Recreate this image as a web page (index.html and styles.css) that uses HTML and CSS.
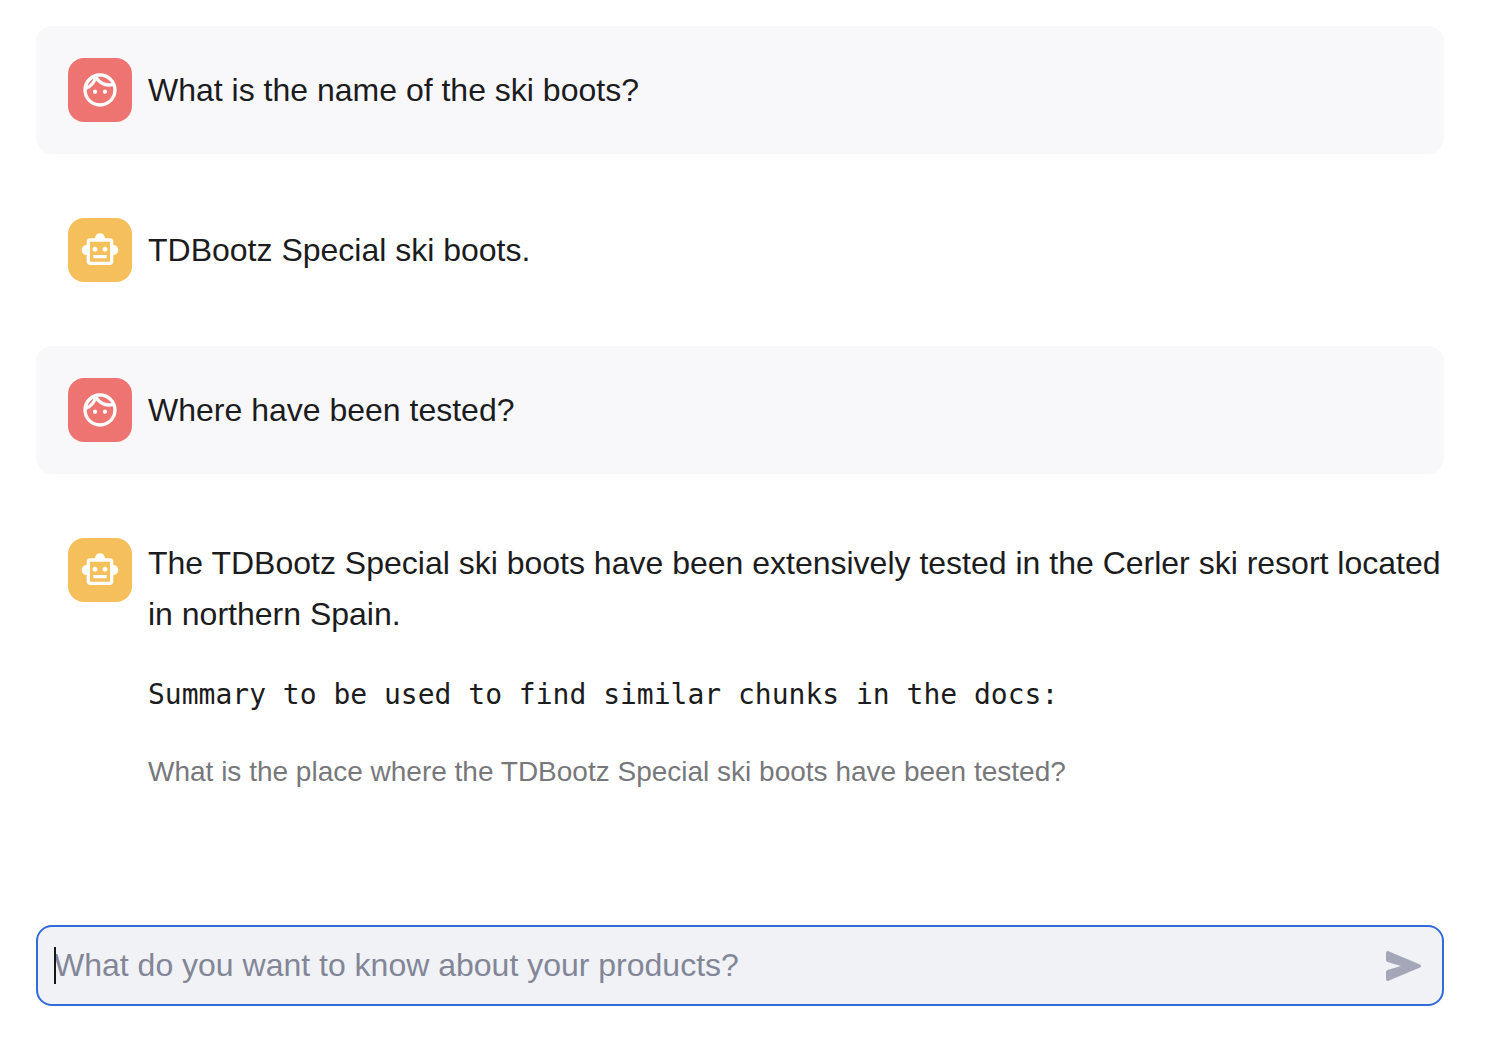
FILE: index.html
```
<!DOCTYPE html>
<html lang="en">
<head>
<meta charset="utf-8">
<meta name="viewport" content="width=device-width, initial-scale=1">
<title>Product chat</title>
<link rel="stylesheet" href="styles.css">
</head>
<body>
<svg class="sprite" aria-hidden="true">
  <symbol id="face" viewBox="0 0 24 24"><path d="M10.25 13c0 .69-.56 1.25-1.25 1.25S7.75 13.69 7.75 13s.56-1.25 1.25-1.25 1.25.56 1.25 1.25zM15 11.75c-.69 0-1.25.56-1.25 1.25s.56 1.25 1.25 1.25 1.25-.56 1.25-1.25-.56-1.25-1.25-1.25zm7 .25c0 5.52-4.48 10-10 10S2 17.52 2 12 6.48 2 12 2s10 4.48 10 10zM10.66 4.12C12.06 6.44 14.6 8 17.5 8c.46 0 .91-.05 1.34-.12C17.44 5.56 14.9 4 12 4c-.46 0-.91.05-1.34.12zM4.42 9.47c1.71-.97 3.03-2.55 3.66-4.44C6.37 6 5.05 7.58 4.42 9.47zM20 12c0-.78-.12-1.53-.33-2.24-.7.15-1.42.24-2.17.24-3.13 0-5.92-1.44-7.76-3.69C8.69 8.87 6.6 10.88 4 11.86c.01.04 0 .09 0 .14 0 4.41 3.59 8 8 8s8-3.59 8-8z"/></symbol>
  <symbol id="robot" viewBox="0 0 24 24"><path d="M20 9V7c0-1.1-.9-2-2-2h-3c0-1.66-1.34-3-3-3S9 3.34 9 5H6c-1.1 0-2 .9-2 2v2c-1.66 0-3 1.34-3 3s1.34 3 3 3v4c0 1.1.9 2 2 2h12c1.1 0 2-.9 2-2v-4c1.66 0 3-1.34 3-3s-1.34-3-3-3zm-2 10H6V7h12v12zm-9-6c-.83 0-1.5-.67-1.5-1.5S8.17 10 9 10s1.5.67 1.5 1.5S9.83 13 9 13zm7.5-1.5c0 .83-.67 1.5-1.5 1.5s-1.5-.67-1.5-1.5.67-1.5 1.5-1.5 1.5.67 1.5 1.5zM8 15h8v2H8v-2z"/></symbol>
</svg>
<main class="chat">
  <section class="messages">
    <article class="message message-user">
      <span class="avatar avatar-user"><svg class="icon" aria-hidden="true"><use href="#face"/></svg></span>
      <div class="content"><p class="text">What is the name of the ski boots?</p></div>
    </article>
    <article class="message">
      <span class="avatar avatar-bot"><svg class="icon" aria-hidden="true"><use href="#robot"/></svg></span>
      <div class="content"><p class="text">TDBootz Special ski boots.</p></div>
    </article>
    <article class="message message-user">
      <span class="avatar avatar-user"><svg class="icon" aria-hidden="true"><use href="#face"/></svg></span>
      <div class="content"><p class="text">Where have been tested?</p></div>
    </article>
    <article class="message">
      <span class="avatar avatar-bot"><svg class="icon" aria-hidden="true"><use href="#robot"/></svg></span>
      <div class="content">
        <p class="text">The TDBootz Special ski boots have been extensively tested in the Cerler ski resort located in northern Spain.</p>
        <p class="mono">Summary to be used to find similar chunks in the docs:</p>
        <p class="caption">What is the place where the TDBootz Special ski boots have been tested?</p>
      </div>
    </article>
  </section>
  <form class="composer">
    <span class="caret" aria-hidden="true"></span>
    <input class="prompt" type="text" aria-label="Question" placeholder="What do you want to know about your products?">
    <button class="send" type="button" aria-label="Send">
      <svg class="icon" viewBox="0 0 40 40" aria-hidden="true"><path d="M3 7.500V14Q3 15.500 4.500 15.900L18 20L4.500 24.100Q3 24.500 3 26V33Q3 35.800 5.500 34.800L37 21.600Q39 20 37 18.400L5.500 5.200Q3 4.400 3 7.500Z"/></svg>
    </button>
  </form>
</main>
</body>
</html>
```
FILE: styles.css
```
* { box-sizing: border-box; }
body {
  margin: 0;
  background: #fff;
  color: #1b1c20;
  font-family: "Liberation Sans", Arial, sans-serif;
  font-size: 32px;
}
p { margin: 0; }
.sprite { position: absolute; width: 0; height: 0; }
.chat { padding: 26px 66px 40px 36px; }
.messages { display: flex; flex-direction: column; gap: 32px; }
.message {
  display: flex;
  gap: 16px;
  padding: 32px 0 32px 32px;
  border-radius: 16px;
}
.message-user { background: #f8f8fb; }
.avatar {
  display: flex;
  flex: none;
  align-items: center;
  justify-content: center;
  width: 64px;
  height: 64px;
  border-radius: 16px;
  color: #fff;
}
.avatar-user { background: #ed7470; }
.avatar-bot { background: #f5bf5b; }
.icon { display: block; width: 40px; height: 40px; fill: currentColor; }
.content {
  display: flex;
  flex: 1;
  flex-direction: column;
  justify-content: center;
  gap: 32px;
  min-width: 0;
}
.text { line-height: 51px; }
.mono {
  font-family: "DejaVu Sans Mono", monospace;
  font-size: 28px;
  line-height: 45px;
}
.caption { color: #77787c; font-size: 28px; line-height: 45px; }
.composer {
  position: relative;
  display: flex;
  align-items: center;
  height: 81px;
  margin-top: 99px;
  padding: 0 19px 0 16px;
  border: 2px solid #326bdc;
  border-radius: 16px;
  background: #f0f2f6;
}
.prompt {
  flex: 1;
  min-width: 0;
  height: 100%;
  padding: 0;
  border: 0;
  outline: 0;
  background: transparent;
  color: inherit;
  font: inherit;
}
.prompt::placeholder { color: #838697; opacity: 1; }
.caret {
  position: absolute;
  top: 20px;
  left: 16px;
  width: 2px;
  height: 37px;
  background: #16171c;
}
.send {
  flex: none;
  padding: 0;
  border: 0;
  background: transparent;
  color: #a4a7b7;
}
```
